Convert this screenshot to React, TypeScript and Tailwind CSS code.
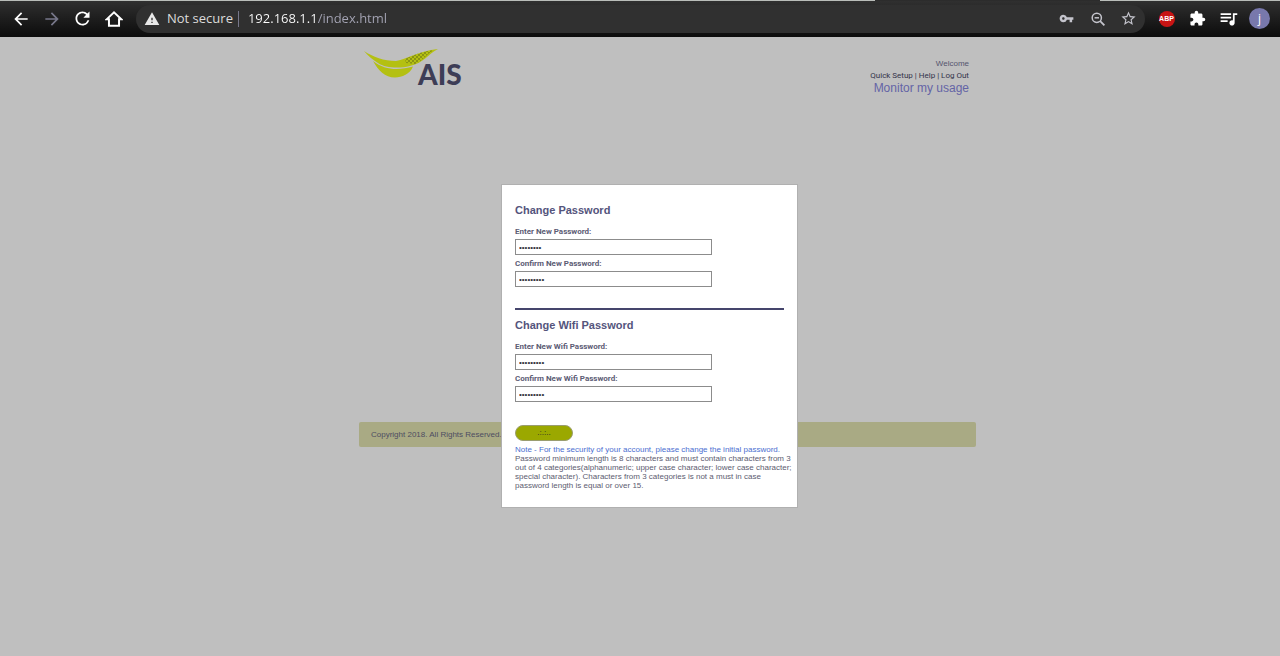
import React from 'react';
import {
  MdArrowBack,
  MdArrowForward,
  MdExtension,
  MdQueueMusic,
  MdRefresh,
  MdStarBorder,
  MdVpnKey,
  MdWarning,
} from 'react-icons/md';

// ============================================================================
// Type Definitions
// ============================================================================

interface PasswordFieldProps {
  id: string;
  label: string;
  defaultValue: string;
}

interface PasswordSectionProps {
  title: string;
  fields: PasswordFieldProps[];
}

// ============================================================================
// Data
// ============================================================================

const loginFields: PasswordFieldProps[] = [
  { id: 'new-password', label: 'Enter New Password:', defaultValue: 'password' },
  { id: 'confirm-password', label: 'Confirm New Password:', defaultValue: 'password1' },
];

const wifiFields: PasswordFieldProps[] = [
  { id: 'new-wifi-password', label: 'Enter New Wifi Password:', defaultValue: 'password1' },
  { id: 'confirm-wifi-password', label: 'Confirm New Wifi Password:', defaultValue: 'password1' },
];

// ============================================================================
// Browser toolbar
// ============================================================================

const iconButton = 'flex h-[21px] w-[21px] shrink-0 items-center justify-center';

function HomeIcon() {
  return (
    <svg viewBox="0 0 20 20" className="size-[18px]" fill="none" stroke="currentColor" strokeWidth="2.2">
      <path d="M1.8 10.4 10 2.6l8.2 7.8H15.6V17.4H4.4v-7Z" />
    </svg>
  );
}

function ZoomOutIcon() {
  return (
    <svg viewBox="0 0 16 16" className="size-4" fill="none" stroke="currentColor" strokeWidth="1.5">
      <circle cx="6.8" cy="6.8" r="4.6" />
      <path d="M10.2 10.2 14.4 14.4" strokeWidth="1.8" />
      <path d="M4.6 6.8h4.4" />
    </svg>
  );
}

function BrowserBar() {
  return (
    <header>
      {/* Bottom edge of the tab strip, broken by the active tab */}
      <div className="flex h-px bg-[#2c2c2c]">
        <span className="flex-[875] bg-[#b9bdb9]" />
        <span className="flex-[225]" />
        <span className="flex-[180] bg-[#b9bdb9]" />
      </div>
      <div className="flex h-9 items-center bg-linear-to-b from-[#303030] to-[#0c0c0c] pb-px font-['Open_Sans','Noto_Sans',sans-serif] text-white">
        <nav className="flex shrink-0 items-center gap-[10px] pl-[10px]">
          <button type="button" aria-label="Back" className={iconButton}><MdArrowBack size={20} /></button>
          <button type="button" aria-label="Forward" className={`${iconButton} text-[#77778a]`}>
            <MdArrowForward size={20} />
          </button>
          <button type="button" aria-label="Reload" className={iconButton}><MdRefresh size={21} /></button>
          <button type="button" aria-label="Home" className={iconButton}><HomeIcon /></button>
        </nav>

        <div className="ml-3 flex h-7 flex-1 items-center rounded-full bg-[#303030] pr-[6px] pl-2 text-[13px]">
          <MdWarning size={16} className="shrink-0 text-[#e8e8e8]" />
          <span className="ml-[7px] text-[#dcdcdc]">Not secure</span>
          <span className="mr-[9px] ml-[5px] h-4 w-px bg-[#77778a]" />
          {/* Host is brighter than the path */}
          <input
            type="text"
            aria-label="Address"
            defaultValue="192.168.1.1/index.html"
            className="min-w-0 flex-1 bg-linear-to-r from-white from-[70px] to-[#a5a5b5] to-[70px] bg-clip-text text-transparent"
          />
          <div className="flex items-center gap-[10px] text-[#c4c4cc]">
            <button type="button" aria-label="Saved passwords" className={iconButton}><MdVpnKey size={15} /></button>
            <button type="button" aria-label="Zoom" className={iconButton}><ZoomOutIcon /></button>
            <button type="button" aria-label="Bookmark" className={iconButton}><MdStarBorder size={17} /></button>
          </div>
        </div>

        <div className="flex shrink-0 items-center gap-[10px] pr-[10px] pl-[11px]">
          <button type="button" className={iconButton}>
            <span className="size-4 rounded-full bg-[#c81414] text-center font-['Liberation_Sans',sans-serif] text-[7px] leading-4 font-bold">
              ABP
            </span>
          </button>
          <button type="button" aria-label="Extensions" className={iconButton}><MdExtension size={17} /></button>
          <button type="button" aria-label="Media" className={iconButton}><MdQueueMusic size={21} /></button>
          <button type="button" className={`${iconButton} rounded-full bg-[#7878ac] text-[12px]`}>j</button>
        </div>
      </div>
    </header>
  );
}

// ============================================================================
// Router page
// ============================================================================

function Logo() {
  return (
    <div className="flex">
      <svg viewBox="0 0 76 32" className="h-8 w-[76px] shrink-0" aria-hidden="true">
        <defs>
          <pattern id="dots" width="4" height="4" patternUnits="userSpaceOnUse">
            <circle cx="1" cy="1" r="0.7" fill="#3f4512" />
            <circle cx="3" cy="3" r="0.7" fill="#3f4512" />
          </pattern>
        </defs>
        <path d="M0 3 C9 9 20 13 32 13 C44 11 54 3 74 1 C64 6 60 15 46 18 C36 20.5 22 20.5 14 15 C9 12 4 8 0 3 Z" fill="#b4c012" />
        <path d="M9 13 C21 22.5 35 22.5 49 18.5 C46 26 38 29.5 31 29.5 C21 29.5 14 22 9 13 Z" fill="#b4c012" />
        <path d="M41 11 C51 6 60 3 70 2 C62 6 59 13 51 16 L42 15 Z" fill="url(#dots)" />
      </svg>
      <span className="-ml-[22px] pt-[14px] font-['Lato',sans-serif] text-[28px] leading-6 font-black text-[#3d3d56]">
        AIS
      </span>
    </div>
  );
}

function PageHeader() {
  return (
    <div className="flex items-start justify-between pr-[7px] pl-[5px]">
      <Logo />
      <div className="pt-[10px] text-right text-[8px] leading-3 text-[#33334a]">
        <p className="text-[#55556e]">Welcome</p>
        <p className="font-['Roboto',sans-serif]">
          <a href="#setup">Quick Setup</a> | <a href="#help">Help</a> | <a href="#logout">Log Out</a>
        </p>
        <a href="#usage" className="block text-[12px] text-[#6464a6]">Monitor my usage</a>
      </div>
    </div>
  );
}

// ============================================================================
// Dialog
// ============================================================================

function PasswordField({ id, label, defaultValue }: PasswordFieldProps) {
  return (
    <div>
      <label
        htmlFor={id}
        className="block pt-[2px] font-['Roboto',sans-serif] text-[8px] leading-[14px] font-bold text-[#5c5c74]"
      >
        {label}
      </label>
      <input
        id={id}
        type="password"
        defaultValue={defaultValue}
        className="block h-4 w-[197px] border border-[#8c8c8c] bg-white px-[3px] text-[8px] text-[#33333c]"
      />
    </div>
  );
}

function PasswordSection({ title, fields }: PasswordSectionProps) {
  return (
    <section>
      <h2 className="mb-[7px] text-[11px] leading-3 font-bold text-[#54547c]">{title}</h2>
      {fields.map((field) => (
        <PasswordField key={field.id} {...field} />
      ))}
    </section>
  );
}

function PasswordDialog() {
  return (
    <form
      role="dialog"
      aria-label="Change Password"
      className="w-[297px] border border-[#b0b0b0] bg-white px-[13px] pt-[19px] pb-[17px]"
    >
      <PasswordSection title="Change Password" fields={loginFields} />
      <hr className="mt-[21px] mb-[9px] border-t-2 border-[#45456c]" />
      <PasswordSection title="Change Wifi Password" fields={wifiFields} />
      <button
        type="button"
        aria-label="Apply"
        className="mt-[23px] block h-4 w-[58px] rounded-full border border-[#9a9d70] bg-[#9ba800] text-center text-[8px] leading-[14px] text-[#22222c]"
      >
        .:.:..
      </button>
      <p className="-mr-[11px] mt-1 text-[8px] leading-[9px] text-[#5c5c70]">
        <span className="block text-[#4a6ed0]">
          Note - For the security of your account, please change the initial password.
        </span>
        Password minimum length is 8 characters and must contain characters from 3 out of 4
        categories(alphanumeric; upper case character; lower case character; special character).
        Characters from 3 categories is not a must in case
        <br />
        password length is equal or over 15.
      </p>
    </form>
  );
}

export default function App() {
  return (
    <div className="flex min-h-screen flex-col bg-[#bfbfbf] font-['Liberation_Sans',Arial,sans-serif]">
      <BrowserBar />
      <main className="relative flex-1 pt-[11px] pl-[55px]">
        <div className="mx-auto max-w-[617px]">
          <PageHeader />
          <footer className="mt-[328px] rounded-xs bg-[#a9aa84] px-3 text-[8px] leading-[25px] text-[#4d4d62]">
            Copyright 2018. All Rights Reserved.
          </footer>
        </div>
        {/* Modal floats over the page */}
        <div className="absolute inset-x-0 top-[147px] flex justify-center pl-[19px]">
          <PasswordDialog />
        </div>
      </main>
    </div>
  );
}
